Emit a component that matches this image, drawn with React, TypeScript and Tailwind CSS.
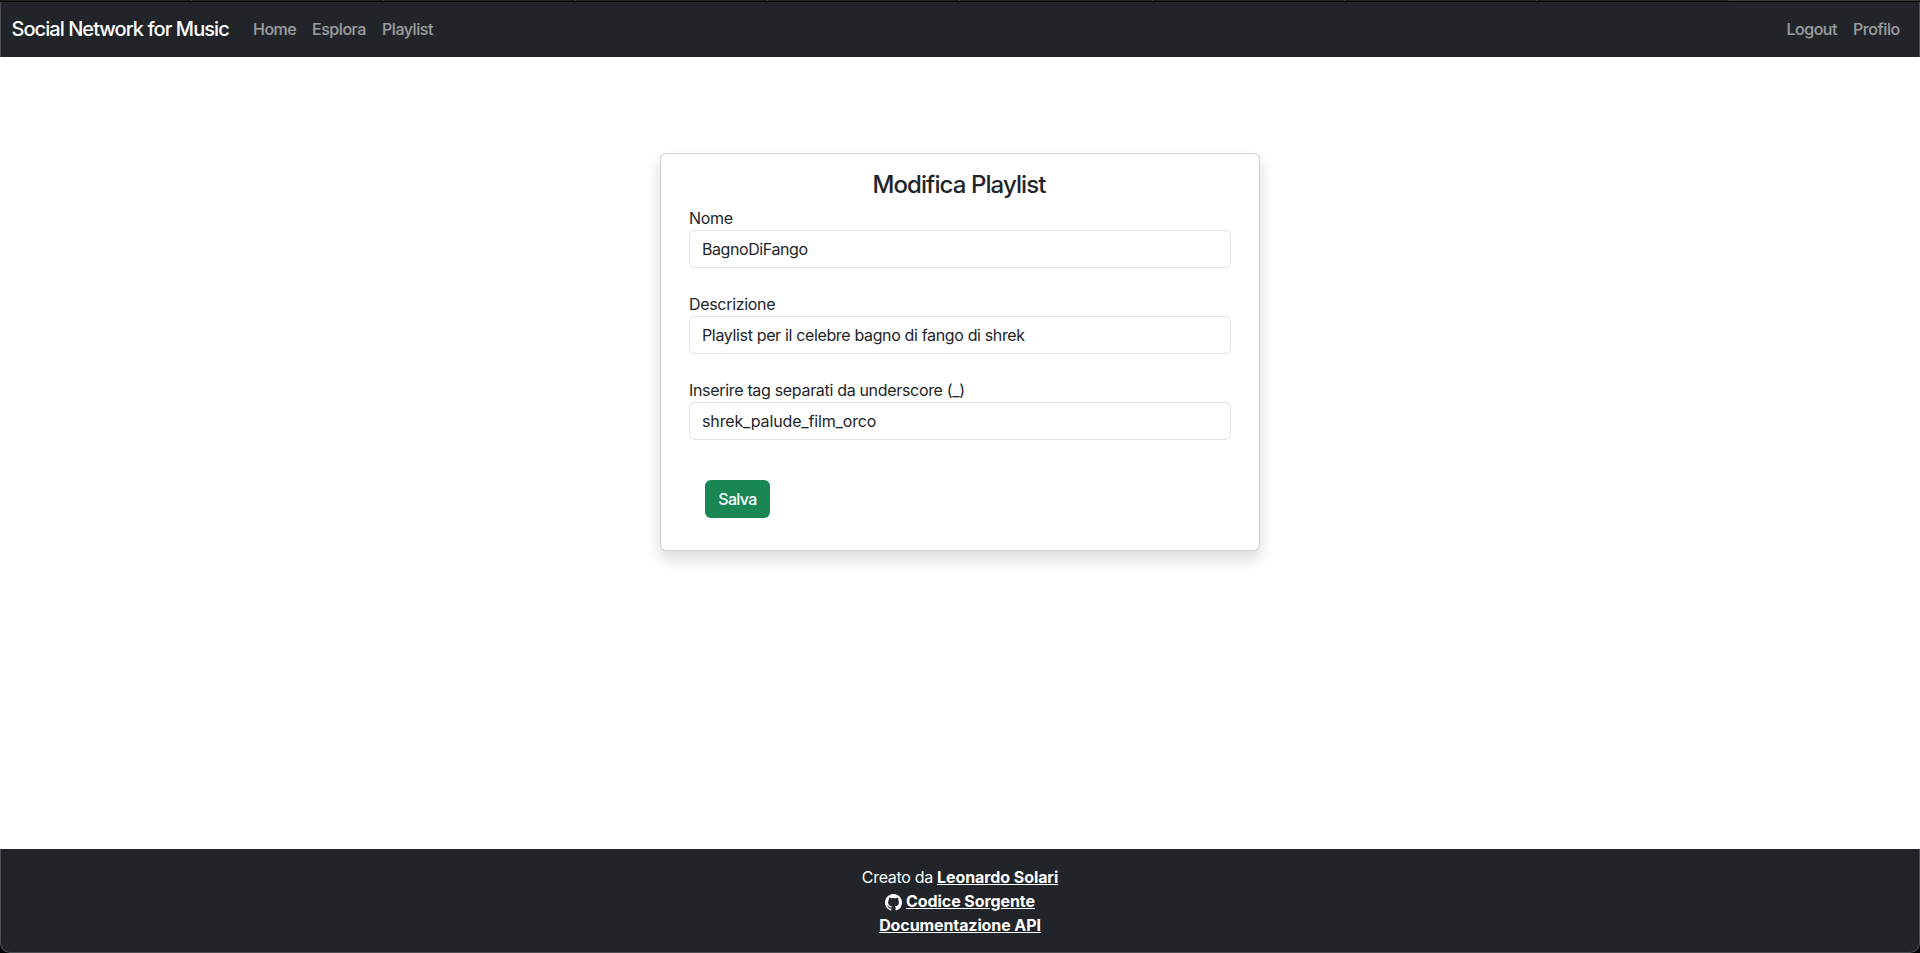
import { BsGithub } from "react-icons/bs";

const tabs = Array.from({ length: 10 }, (_, i) => i);

const fields = [
  { id: "name", label: "Nome", value: "BagnoDiFango", tracking: "tracking-[-0.42px]" },
  {
    id: "description",
    label: "Descrizione",
    value: "Playlist per il celebre bagno di fango di shrek",
    tracking: "tracking-[-0.35px]",
  },
  {
    id: "tags",
    label: "Inserire tag separati da underscore (_)",
    value: "shrek_palude_film_orco",
    tracking: "tracking-[-0.14px]",
  },
];

function NavBar() {
  return (
    <header className="shrink-0">
      <div className="flex h-px">
        {tabs.map((tab) => (
          <div
            key={tab}
            className="h-px flex-1 border-r border-[#484848] bg-[#1f1f1f] last:border-r-0 last:bg-[#383838]"
          />
        ))}
      </div>
      <div className="h-px bg-black" />
      <nav className="flex h-[55px] items-center border-x border-[#4c5054] bg-[#212529] pr-[18px] pb-px pl-[10.5px] font-[450] text-white/55">
        <a href="#" className="w-[241.5px] text-xl tracking-[-0.95px] whitespace-nowrap text-white">
          Social Network for Music
        </a>
        <a href="#" className="w-[59px] tracking-[-0.5px]">Home</a>
        <a href="#" className="w-[70px] tracking-[-0.45px]">Esplora</a>
        <a href="#" className="tracking-[-0.45px]">Playlist</a>
        <a href="#" className="ml-auto w-[66.5px] tracking-[-0.5px]">Logout</a>
        <a href="#" className="w-[48px] tracking-[-0.4px]">Profilo</a>
      </nav>
    </header>
  );
}

function PlaylistForm() {
  return (
    <form className="h-[398px] w-[600px] rounded-md border border-black/[0.175] bg-white px-7 pt-4 shadow-[0_8px_16px_rgba(0,0,0,0.15)]">
      <h5 className="mb-[7px] pr-0.5 text-center text-2xl leading-[29px] font-medium tracking-[-0.9px]">
        Modifica Playlist
      </h5>
      {fields.map((field) => (
        <div key={field.id} className="mb-6">
          <label htmlFor={field.id} className="block h-6">{field.label}</label>
          <input
            id={field.id}
            type="text"
            defaultValue={field.value}
            className={`block h-[38px] w-full rounded-md border border-[#dee2e6] bg-white px-3 ${field.tracking}`}
          />
        </div>
      ))}
      <button
        type="button"
        className="mt-4 ml-4 h-[38px] w-[65px] rounded-md bg-[#198754] font-medium tracking-[-0.65px] text-white"
      >
        Salva
      </button>
    </form>
  );
}

function Footer() {
  return (
    <div className="shrink-0 bg-black">
      <footer className="flex h-[104px] flex-col items-center rounded-b-[10px] border-x border-b border-[#4c5054] bg-[#212529] pt-4 text-white">
        <p className="h-6">
          Creato da{" "}
          <a href="#" className="font-bold tracking-[-0.08px] underline">Leonardo Solari</a>
        </p>
        <p className="flex h-6 items-center gap-1">
          <BsGithub className="mt-0.5 size-[17px]" />
          <a href="#" className="font-bold tracking-[-0.08px] underline">Codice Sorgente</a>
        </p>
        <p className="h-6">
          <a href="#" className="font-bold tracking-[-0.1px] underline">Documentazione API</a>
        </p>
      </footer>
    </div>
  );
}

export default function App() {
  return (
    <div className="flex h-[953px] flex-col bg-white font-['Inter',sans-serif] text-base tracking-[-0.32px] text-[#212529]">
      <NavBar />
      <main className="flex flex-1 items-start justify-center pt-24">
        <PlaylistForm />
      </main>
      <Footer />
    </div>
  );
}
